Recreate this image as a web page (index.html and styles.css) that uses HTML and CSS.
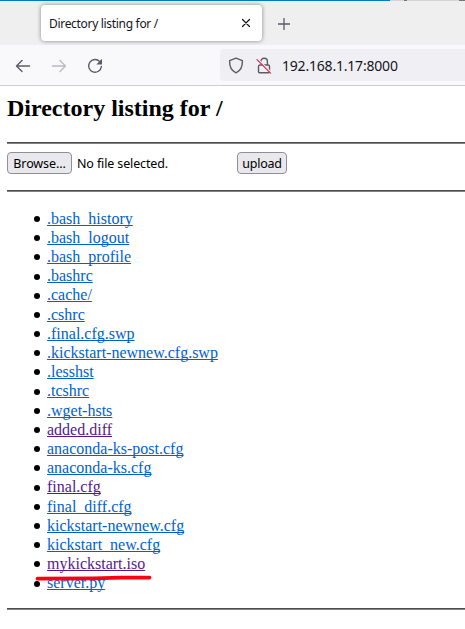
FILE: index.html
```
<!DOCTYPE html>
<html lang="en">
<head>
<meta charset="utf-8">
<title>Directory listing for /</title>
<link rel="stylesheet" href="styles.css">
</head>
<body>
<header class="browser">
  <div class="tabs">
    <div class="tab">
      <span class="tab-title">Directory listing for /</span>
      <svg class="close" width="10" height="10" viewBox="0 0 10 10"><path d="M1.5 1.5l7 7M8.5 1.5l-7 7"/></svg>
    </div>
    <svg class="plus" width="12" height="12" viewBox="0 0 12 12"><path d="M6 0.2v11.6M0.2 6h11.6"/></svg>
    <div class="edge"><i class="s1"></i><i class="s2"></i><i class="s3"></i></div>
  </div>
  <nav class="toolbar">
    <svg class="back" width="16" height="16" viewBox="0 0 16 16"><path d="M14.500 8H1.700M7 2.500L1.500 8L7 13.500"/></svg>
    <svg class="forward" width="16" height="16" viewBox="0 0 16 16"><path d="M1.500 8h12.800M9 2.500L14.500 8L9 13.500"/></svg>
    <svg class="reload" width="16" height="16" viewBox="0 0 16 16"><path d="M12.800 3.600A6.400 6.400 0 1 0 14.400 8.500"/><path class="solid" d="M15 .8v5.700H9.300z"/></svg>
    <div class="address">
      <svg class="shield" width="16" height="17" viewBox="0 0 16 17"><path d="M8 1.200L14.400 3.700C14.600 9.500 12.400 13.800 8 15.800C3.600 13.800 1.400 9.500 1.600 3.700Z"/></svg>
      <svg class="lock" width="16" height="17" viewBox="0 0 16 17"><path d="M4.800 5V4.600a3.300 3.300 0 0 1 6.600 0V7.500M3.500 8H12.200a1.300 1.300 0 0 1 1.300 1.300V14.500a1.300 1.300 0 0 1-1.300 1.300H3.800a1.300 1.300 0 0 1-1.300-1.300V9.300a1.300 1.300 0 0 1 1.300-1.300"/><path class="halo" d="M2 2.300l13.500 13.500"/><path class="slash" d="M1 2.700l13.500 13.500"/></svg>
      <span class="url">192.168.1.17:8000</span>
    </div>
  </nav>
</header>
<main>
  <h2>Directory listing for /</h2>
  <hr>
  <form>
    <button class="browse" type="button">Browse...</button>
    <span class="file">No file selected.</span>
    <button class="upload" type="button">upload</button>
  </form>
  <hr>
  <ul>
    <li><a href="#">.bash_history</a></li>
    <li><a href="#">.bash_logout</a></li>
    <li><a href="#">.bash_profile</a></li>
    <li><a href="#">.bashrc</a></li>
    <li><a href="#">.cache/</a></li>
    <li><a href="#">.cshrc</a></li>
    <li><a href="#">.final.cfg.swp</a></li>
    <li><a href="#">.kickstart-newnew.cfg.swp</a></li>
    <li><a href="#">.lesshst</a></li>
    <li><a href="#">.tcshrc</a></li>
    <li><a href="#">.wget-hsts</a></li>
    <li><a class="visited" href="#">added.diff</a></li>
    <li><a href="#">anaconda-ks-post.cfg</a></li>
    <li><a href="#">anaconda-ks.cfg</a></li>
    <li><a class="visited" href="#">final.cfg</a></li>
    <li><a href="#">final_diff.cfg</a></li>
    <li><a href="#">kickstart-newnew.cfg</a></li>
    <li><a href="#">kickstart_new.cfg</a></li>
    <li class="marked"><a class="visited" href="#">mykickstart.iso</a>
      <svg class="stroke" width="120" height="8" viewBox="0 0 120 8"><path d="M3.500 4.700L60 4.300L87 3.600H115.500"/></svg></li>
    <li><a href="#">server.py</a></li>
  </ul>
  <hr>
</main>
</body>
</html>
```
FILE: styles.css
```
* { box-sizing: border-box; }
html, body { margin: 0; height: 629px; overflow: hidden; background: #fff; }
body { font: 16px/19.2px "Liberation Serif", serif; color: #000; }
svg { display: block; flex: none; fill: none; stroke: #5b5b66; stroke-width: 1.4; stroke-linecap: round; stroke-linejoin: round; }

.tabs { position: relative; display: flex; align-items: flex-start; height: 45px; padding: 5px 0 0 41px; background: #efefef; }
.tab { display: flex; align-items: center; justify-content: space-between; width: 221px; height: 36px; padding: 0 11px 0 8px; background: #fff; border-radius: 4px; box-shadow: 0 0 4px rgba(0, 0, 0, .45); }
.tab-title { font: 12px/16px "Noto Sans", sans-serif; letter-spacing: -.31px; white-space: nowrap; color: #15141a; padding-top: 2px; }
.close { stroke: #15141a; stroke-width: 1.2; }
.plus { margin: 13px 0 0 15.5px; stroke-width: 1.3; }
.edge { position: absolute; top: 0; left: 0; display: flex; width: 100%; height: 1px; background: #d4d4d4; }
.edge i { height: 1px; }
.s1 { width: 390px; background: #0079c8; }
.s2 { width: 3px; margin-left: 14px; background: #777; }
.s3 { width: 6px; margin-left: 52px; background: #777; }

.toolbar { display: flex; align-items: center; height: 41px; padding: 1px 0 0 15px; background: #f9f9fb; border-bottom: 1px solid #ccc; }
.forward { margin-left: 20px; stroke: #bbbbc0; }
.reload { margin-left: 20px; }
.solid { fill: #5b5b66; stroke: none; }
.address { display: flex; align-items: center; flex: 1; height: 32px; margin: -1px 0 0 117px; padding-left: 8px; background: #f0f0f4; border-radius: 4px 0 0 4px; }
.lock { margin-left: 12px; }
.halo { stroke: #f0f0f4; }
.slash { stroke: #e22850; stroke-width: 1.2; }
.url { margin-left: 10px; padding-top: 2px; font: 14px/20px "Noto Sans", sans-serif; letter-spacing: -.2px; color: #15141a; }

main { padding: 0 0 0 7px; }
h2 { margin: 8px 0 19px; font-size: 24px; line-height: 29px; }
hr { height: 2px; margin: 0; border: 0; background: linear-gradient(#4e4e4e 50%, #818181 50%); }
form { display: flex; align-items: center; height: 46px; padding-bottom: 8px; font: 12.500px/18px "Noto Sans", sans-serif; }
button { height: 22px; margin: 0; padding: 1px 0 0; font: inherit; color: #000; background: #e9e9ed; border: 1px solid #8f8f9d; border-radius: 4px; white-space: nowrap; }
.browse { width: 65px; letter-spacing: -.1px; }
.file { width: 160px; margin-left: 5px; padding-top: 1px; letter-spacing: -.13px; white-space: nowrap; }
.upload { width: 50px; letter-spacing: -.25px; }
ul { margin: 16.700px 0 15.300px; padding-left: 40px; list-style: none; }
li { position: relative; height: 19.200px; }
li::before { content: ""; position: absolute; left: -13.500px; top: 7.300px; width: 6px; height: 6px; border-radius: 50%; background: #000; }
a { color: #0061ce; text-decoration: underline; text-underline-offset: 1px; text-decoration-thickness: 1px; text-decoration-skip-ink: none; }
.visited { color: #551a8b; }
.marked { z-index: 1; }
.stroke { position: absolute; left: -13px; top: 19.500px; stroke: #fb0010; stroke-width: 3.800; }
```
